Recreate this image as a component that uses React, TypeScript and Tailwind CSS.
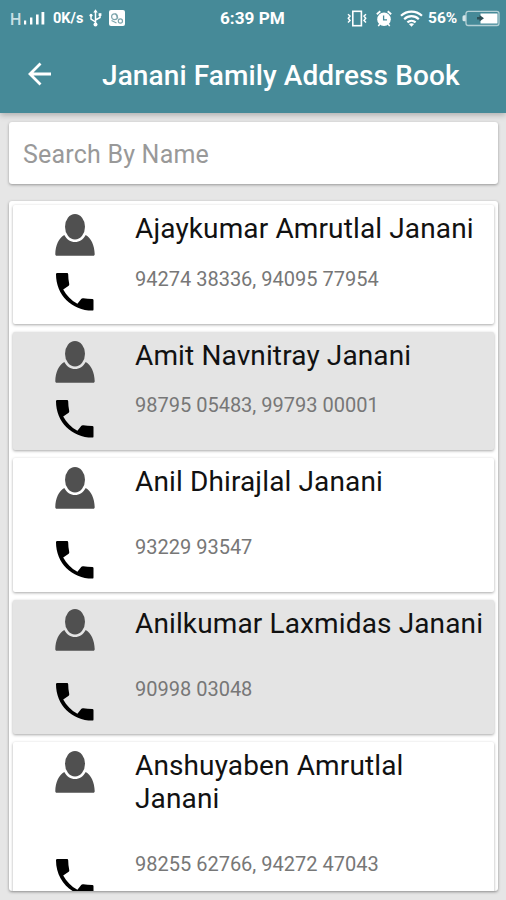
import React from "react";

interface Contact {
    name: string;
    phones: string;
    shaded?: boolean;
    // 行の高さと各要素の余白
    rowClass: string;
    phoneIconClass: string;
    phonesClass: string;
}

const contacts: Contact[] = [
    {
        name: "Ajaykumar Amrutlal Janani",
        phones: "94274 38336, 94095 77954",
        rowClass: "h-[119px]",
        phoneIconClass: "mt-[17px]",
        phonesClass: "mt-[22px]",
    },
    {
        name: "Amit Navnitray Janani",
        phones: "98795 05483, 99793 00001",
        shaded: true,
        rowClass: "h-[118px]",
        phoneIconClass: "mt-[17px]",
        phonesClass: "mt-[21px]",
    },
    {
        name: "Anil Dhirajlal Janani",
        phones: "93229 93547",
        rowClass: "h-[134px]",
        phoneIconClass: "mt-[32px]",
        phonesClass: "mt-[37.5px]",
    },
    {
        name: "Anilkumar Laxmidas Janani",
        phones: "90998 03048",
        shaded: true,
        rowClass: "h-[134px]",
        phoneIconClass: "mt-[32px]",
        phonesClass: "mt-[37.5px]",
    },
    {
        name: "Anshuyaben Amrutlal Janani",
        phones: "98255 62766, 94272 47043",
        rowClass: "h-[170px]",
        phoneIconClass: "mt-[66px]",
        phonesClass: "mt-[37.5px]",
    },
];

const SignalIcon = () => (
    <svg className="ml-px h-[13px] w-[21px]" viewBox="0 0 21 13" fill="currentColor">
        <rect x="0" y="8.5" width="2.2" height="4" />
        <rect x="6" y="5.5" width="2.4" height="7" />
        <rect x="12" y="2.5" width="2.6" height="10" />
        <rect x="17.5" y="0" width="2.8" height="12.5" />
    </svg>
);

const UsbIcon = () => (
    <svg
        className="ml-[2px] h-[18px] w-[13px]"
        viewBox="0 0 13 18"
        fill="none"
        stroke="currentColor"
        strokeWidth="1.5"
    >
        <path d="M6.5 2v13M6.5 13L2 10V6.5M6.5 11L11 8.5V5.5" />
        <path d="M4.3 3.6L6.5 0.3l2.2 3.3z" fill="currentColor" stroke="none" />
        <circle cx="6.5" cy="15.5" r="2" fill="currentColor" stroke="none" />
        <circle cx="2" cy="6.2" r="1.5" fill="currentColor" stroke="none" />
        <path d="M9.6 4.2h2.8V7H9.6z" fill="currentColor" stroke="none" />
    </svg>
);

const AppBadgeIcon = () => (
    <svg className="ml-[7px] h-4 w-4" viewBox="0 0 16 16" fill="none">
        <rect width="16" height="16" rx="2" fill="white" />
        <g stroke="#7da5ac" strokeWidth="1.2">
            <circle cx="5.5" cy="6.8" r="2.9" />
            <circle cx="11.4" cy="11" r="2.1" />
            <path d="M2.5 10.5l5 2.5M6.5 3.5l2.5 5" />
        </g>
    </svg>
);

const VibrateIcon = () => (
    <svg
        className="h-[17px] w-[20px]"
        viewBox="0 0 20 17"
        fill="none"
        stroke="currentColor"
        strokeWidth="1.6"
    >
        <rect x="5.8" y="1.3" width="8.6" height="14.4" />
        <path d="M1 4.2l2 1.8-1.7 2.3L3 10.5l-2 2M19 4.2l-2 1.8 1.7 2.3L17 10.5l2 2" strokeWidth="1.5" />
    </svg>
);

const AlarmIcon = () => (
    <svg className="ml-[9px] h-[17px] w-[16px]" viewBox="0 0 16 17" fill="none">
        <circle cx="8" cy="9.3" r="6.8" fill="white" />
        <path d="M0.8 4.2L4.3 1.2M15.2 4.2L11.7 1.2" stroke="white" strokeWidth="1.8" />
        <path d="M3.8 14l-1.5 2.2M12.2 14l1.5 2.2" stroke="white" strokeWidth="1.5" />
        <path d="M7.6 5.5v4.3h3.4" stroke="#468a98" strokeWidth="1.3" />
    </svg>
);

const WifiIcon = () => (
    <svg
        className="ml-[8px] h-[17px] w-[23px]"
        viewBox="0 0 23 17"
        fill="none"
        stroke="currentColor"
        strokeWidth="2.2"
    >
        <path d="M1 5.8C7 .2 16 .2 22 5.8M4.2 9.2c4.2-4 10.4-4 14.6 0M7.4 12.4c2.4-2.2 5.8-2.2 8.2 0" />
        <path d="M8.9 14.1c1.5-1.2 3.7-1.2 5.2 0L11.5 16.8z" fill="currentColor" stroke="none" />
    </svg>
);

const BatteryIcon = () => (
    <svg className="ml-[3px] h-[17px] w-[38px]" viewBox="0 0 38 17" fill="none">
        <path d="M4 5.2H2Q.5 5.2.5 6.7v3Q.5 11.2 2 11.2H4" fill="#d5e6e9" />
        <rect x="4" y="1.3" width="33" height="14.2" rx="2.2" stroke="#b4d0d5" strokeWidth="1.3" />
        <rect x="18.5" y="3.5" width="17" height="10" fill="white" />
        <path d="M17.5 5v2H15v2.600h2.500v2l4.500-3.300z" fill="#2d4f56" />
    </svg>
);

const PersonIcon = () => (
    <svg className="ml-[42px] h-[42px] w-[40px]" viewBox="0 0 40 42" fill="#505050">
        <ellipse cx="20" cy="12.8" rx="10" ry="12.8" />
        <path d="M9.3 21C4 24.2 0.4 31 0.3 40.3c0 .9.5 1.500 1.400 1.500h36.600c.9 0 1.400-.6 1.400-1.500C39.500 31 36 24.200 30.700 21 28.300 25.400 24.500 28 20 28S11.700 25.400 9.300 21z" />
    </svg>
);

const PhoneIcon = ({ className }: { className: string }) => (
    <svg className={`ml-[43px] h-[38px] w-[38px] ${className}`} viewBox="0 0 38 38">
        <path d="M1.2 0h9.800q1.200 0 1.200 1.200 0 5 1 9.600.3 1.100-.5 1.900L7.200 16.600C10.500 22.500 15 27.500 21.400 30.800l4-5q.8-.8 1.900-.5 4 .7 9 .7 1.200 0 1.200 1.200v9.200q0 1.200-1.200 1.200C16 37.500 0 22 0 1.200Q0 0 1.200 0z" />
    </svg>
);

const StatusBar = () => (
    <div className="flex h-[36px] items-center pl-[10px] pr-[6px] text-white">
        <span className="mt-[3px] w-[13px] text-[16px] font-medium leading-none text-[#c9dfe3]">H</span>
        <SignalIcon />
        <span className="ml-[8px] w-[34px] whitespace-nowrap pt-[2px] text-[14.5px] font-bold">0K/s</span>
        <UsbIcon />
        <AppBadgeIcon />
        <span className="ml-[95px] w-[67px] whitespace-nowrap pt-px text-[17.2px] font-bold">6:39 PM</span>
        <div className="ml-auto flex items-center">
            <VibrateIcon />
            <AlarmIcon />
            <WifiIcon />
            <span className="ml-[5px] w-[31px] whitespace-nowrap pt-px text-[15.5px] font-bold">56%</span>
            <BatteryIcon />
        </div>
    </div>
);

const ContactRow = ({ contact }: { contact: Contact }) => (
    <li
        className={`flex shrink-0 rounded-[2px] shadow-[0_1px_3px_rgba(0,0,0,0.35)] ${contact.rowClass} ${
            contact.shaded ? "bg-[#e4e4e4]" : "bg-white"
        }`}
    >
        <div className="w-[122px] shrink-0 pt-[9px]">
            <PersonIcon />
            <PhoneIcon className={contact.phoneIconClass} />
        </div>
        <div className="min-w-0 flex-1 pt-[7px]">
            <p className="w-[355px] text-[28px] leading-[33px] tracking-[0.13px] text-[#111]">{contact.name}</p>
            <p className={`text-[20px] leading-[24px] text-[#777] ${contact.phonesClass}`}>
                {contact.phones}
            </p>
        </div>
    </li>
);

export default function App() {
    return (
        <div className="flex h-[900px] w-[506px] flex-col overflow-hidden bg-[#e6e6e6] font-['Roboto',sans-serif]">
            <header className="h-[113px] shrink-0 bg-[#468a98] shadow-[0_2px_6px_rgba(0,0,0,0.25)]">
                <StatusBar />
                <div className="flex h-[77px] items-center pl-[28px] text-white">
                    <svg className="mb-[2px] h-[24px] w-[24px]" viewBox="0 0 24 24" fill="none" stroke="currentColor" strokeWidth="2.8">
                        <path d="M23 12H2.5M12.5 1.5L2 12l10.5 10.5" />
                    </svg>
                    <h1 className="ml-[50px] mt-[2px] whitespace-nowrap text-[28px] font-medium tracking-[0.1px]">
                        Janani Family Address Book
                    </h1>
                </div>
            </header>

            <div className="ml-[9px] mr-[8px] mt-[9px] flex h-[62px] shrink-0 items-center rounded-[3px] bg-white px-[14px] pt-[3px] shadow-[0_1px_3px_rgba(0,0,0,0.35)]">
                <input
                    type="text"
                    placeholder="Search By Name"
                    className="w-full text-[25px] tracking-[0.2px] placeholder-[#999] outline-none"
                />
            </div>

            <main className="ml-[9px] mr-[8px] mt-[17px] h-[690px] shrink-0 rounded-[3px] bg-white shadow-[0_1px_3px_rgba(0,0,0,0.4)]">
                <ul className="flex h-full flex-col gap-[8px] overflow-hidden px-[4px] pt-[3.5px]">
                    {contacts.map((contact) => (
                        <ContactRow key={contact.name} contact={contact} />
                    ))}
                </ul>
            </main>
        </div>
    );
}
